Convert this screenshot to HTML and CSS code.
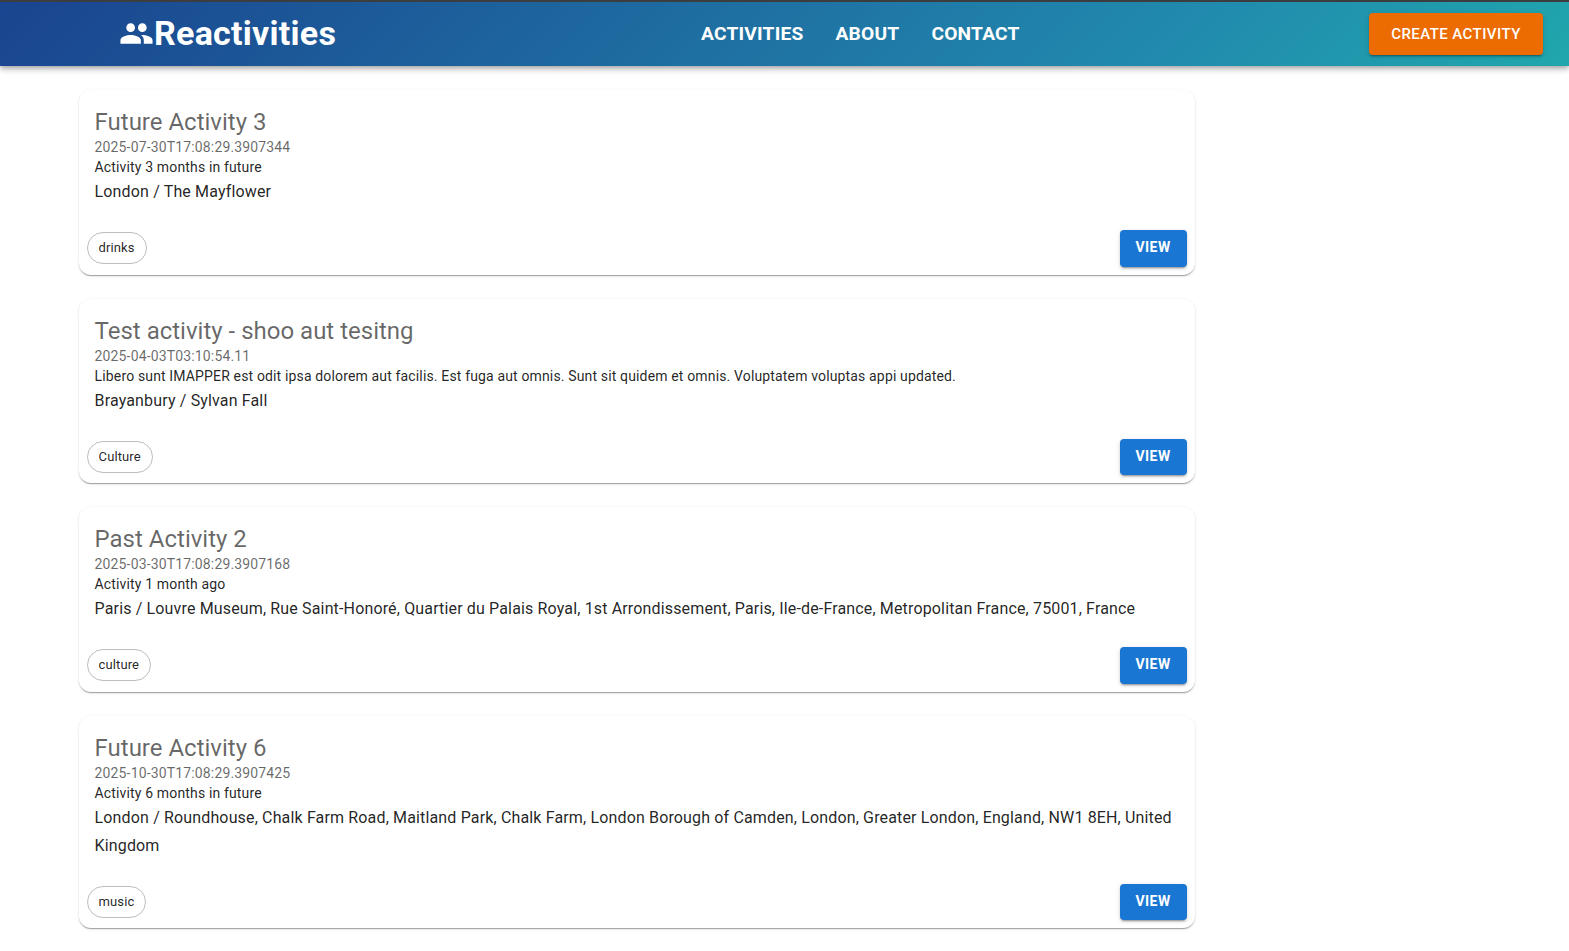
FILE: index.html
```html
<!DOCTYPE html>
<html lang="en">
<head>
<meta charset="utf-8">
<title>Reactivities</title>
<link rel="stylesheet" href="styles.css">
</head>
<body>
<header class="appbar">
  <a class="brand"><svg class="brand-icon" viewBox="0 0 24 24" aria-hidden="true"><path d="M16 11c1.66 0 2.99-1.34 2.99-3S17.66 5 16 5s-3 1.34-3 3 1.34 3 3 3m-8 0c1.66 0 2.99-1.34 2.99-3S9.66 5 8 5 5 6.34 5 8s1.34 3 3 3m0 2c-2.33 0-7 1.17-7 3.5V19h14v-2.500c0-2.330-4.670-3.500-7-3.500m8 0c-.29 0-.62.02-.97.05 1.160.84 1.970 1.970 1.970 3.450V19h6v-2.500c0-2.330-4.670-3.500-7-3.500"/></svg><span class="brand-name">Reactivities</span></a>
  <nav class="nav"><a>Activities</a><a>About</a><a>Contact</a></nav>
  <button class="create">Create activity</button>
</header>
<main class="list">
  <article class="card">
    <div class="content"><h2>Future Activity 3</h2><time>2025-07-30T17:08:29.3907344</time><p class="desc">Activity 3 months in future</p><p class="place">London / The Mayflower</p></div>
    <div class="actions"><span class="chip">drinks</span><button class="view">View</button></div>
  </article>
  <article class="card">
    <div class="content"><h2>Test activity - shoo aut tesitng</h2><time>2025-04-03T03:10:54.11</time><p class="desc">Libero sunt IMAPPER est odit ipsa dolorem aut facilis. Est fuga aut omnis. Sunt sit quidem et omnis. Voluptatem voluptas appi updated.</p><p class="place">Brayanbury / Sylvan Fall</p></div>
    <div class="actions"><span class="chip">Culture</span><button class="view">View</button></div>
  </article>
  <article class="card">
    <div class="content"><h2>Past Activity 2</h2><time>2025-03-30T17:08:29.3907168</time><p class="desc">Activity 1 month ago</p><p class="place">Paris / Louvre Museum, Rue Saint-Honoré, Quartier du Palais Royal, 1st Arrondissement, Paris, Ile-de-France, Metropolitan France, 75001, France</p></div>
    <div class="actions"><span class="chip">culture</span><button class="view">View</button></div>
  </article>
  <article class="card">
    <div class="content"><h2>Future Activity 6</h2><time>2025-10-30T17:08:29.3907425</time><p class="desc">Activity 6 months in future</p><p class="place">London / Roundhouse, Chalk Farm Road, Maitland Park, Chalk Farm, London Borough of Camden, London, Greater London, England, NW1 8EH, United Kingdom</p></div>
    <div class="actions"><span class="chip">music</span><button class="view">View</button></div>
  </article>
</main>
</body>
</html>
```
FILE: styles.css
```css
* { box-sizing: border-box; }
body { margin: 0; min-height: 100vh; background: #fff; color: rgba(0,0,0,.87); font-family: Roboto, sans-serif; }
h2, p { margin: 0; }
button { border: 0; font-family: inherit; text-transform: uppercase; border-radius: 4px; color: #fff; box-shadow: 0 3px 1px -2px rgba(0,0,0,.2), 0 2px 2px rgba(0,0,0,.14), 0 1px 5px rgba(0,0,0,.12); }
.appbar { height: 66px; padding: 0 26px 1px 119px; border-top: 2px solid #3b3d3f; display: grid; grid-template-columns: 582px 1fr auto; align-items: center; color: #fff; background: linear-gradient(135deg, #1a448f 0%, #218aae 74%, #20a7ac 100%); box-shadow: 0 2px 4px -1px rgba(0,0,0,.2), 0 4px 5px rgba(0,0,0,.14), 0 1px 10px rgba(0,0,0,.12); }
.brand { display: flex; align-items: center; font-size: 34px; font-weight: 700; line-height: 42px; letter-spacing: .25px; }
.brand-name { padding-bottom: 2px; }
.brand-icon { width: 35px; height: 35px; fill: currentColor; }
.nav { display: flex; gap: 32px; font-size: 19.2px; font-weight: 700; letter-spacing: .2px; text-transform: uppercase; }
.create { width: 174px; height: 42px; background: #ed6c02; font-size: 15px; font-weight: 500; letter-spacing: .43px; }
.list { width: 1116px; margin: 24px 0 0 78.55px; display: flex; flex-direction: column; gap: 24px; }
.card { border-radius: 12px; box-shadow: 0 2px 1px -1px rgba(0,0,0,.2), 0 1px 1px rgba(0,0,0,.14), 0 1px 3px rgba(0,0,0,.12); }
.content { padding: 16px; }
.card h2 { font-size: 24px; font-weight: 400; line-height: 32px; color: rgba(0,0,0,.6); }
.card time { display: block; margin-top: -.9px; font-size: 14px; line-height: 20px; letter-spacing: .15px; color: rgba(0,0,0,.6); }
.desc { margin-bottom: .9px; font-size: 14px; line-height: 20px; letter-spacing: .15px; }
.place { font-size: 16px; line-height: 28px; letter-spacing: .15px; }
.actions { display: flex; justify-content: space-between; align-items: center; padding: 8px; }
.chip { height: 32px; padding: 0 11px; border: 1px solid #bdbdbd; border-radius: 16px; font-size: 13px; line-height: 30px; letter-spacing: .12px; }
.view { width: 67px; height: 36.5px; padding: 0 0 2px; background: #1976d2; font-size: 14px; font-weight: 700; letter-spacing: .4px; }
```
